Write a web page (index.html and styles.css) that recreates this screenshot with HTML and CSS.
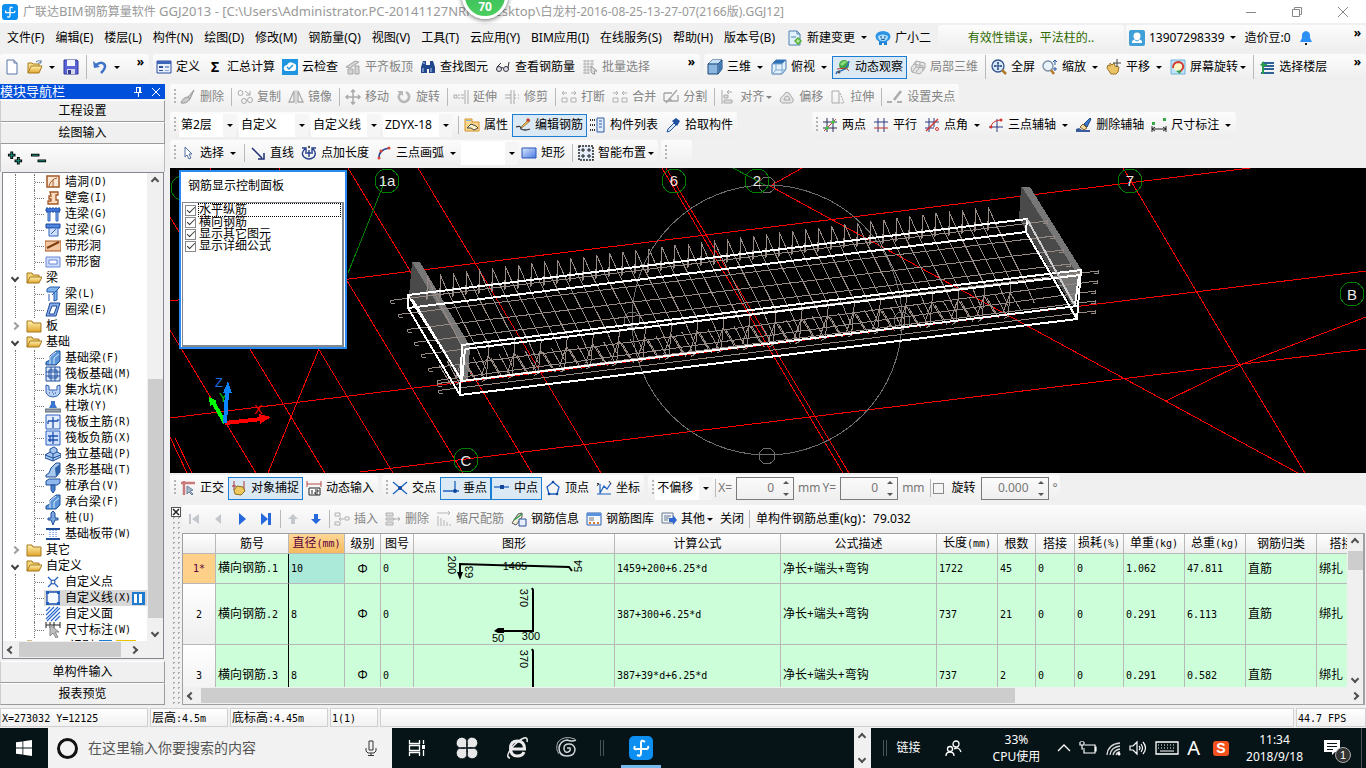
FILE: index.html
```html
<!DOCTYPE html>
<html lang="zh-CN">
<head>
    <meta charset="UTF-8">
    <meta name="viewport" content="width=device-width, initial-scale=1.0">
    <title>广联达BIM钢筋算量软件 GGJ2013</title>
    <link rel="stylesheet" href="styles.css">
</head>
<body>
    <!-- 图标库 -->
    <svg class="sprite" aria-hidden="true">
        <defs>
            <linearGradient id="gFold" x2="0" y2="1"><stop offset="0" stop-color="#fff3b0"/><stop offset="1" stop-color="#e0a32a"/></linearGradient>
            <linearGradient id="gBlue" x2="1" y2="1"><stop offset="0" stop-color="#d8e8ff"/><stop offset="1" stop-color="#4a78e0"/></linearGradient>
        </defs>
        <symbol id="i-logo" viewBox="0 0 24 24"><rect width="24" height="24" rx="5" fill="#0d8ff2"/><path d="M16 6q-4-3-4 1v10q0 4-4 2M6 10q-2 4 2 3h9q3 0 2-3" fill="none" stroke="#fff" stroke-width="2"/></symbol>
        <symbol id="i-new" viewBox="0 0 16 16"><path d="M3 1h7l3 3v11H3z" fill="#fff" stroke="#5a74a6"/><path d="M10 1v3h3" fill="#cfdcf2" stroke="#5a74a6"/></symbol>
        <symbol id="i-open" viewBox="0 0 16 16"><path d="M1 14V4h4l1 1h6v3" fill="#f9e08a" stroke="#a87b1c"/><path d="M1 14l3-7h11l-3 7z" fill="url(#gFold)" stroke="#a87b1c"/><path d="M9 3q3-3 5 0m0-2v3h-3" fill="none" stroke="#5b7fa8"/></symbol>
        <symbol id="i-save" viewBox="0 0 16 16"><path d="M1 1h13l1 1v13H1z" fill="#5a62d8" stroke="#2f3796"/><path d="M4 1h8v6H4z" fill="#f2f4ff"/><path d="M4 10h8v5H4z" fill="#d5d8e8"/><path d="M5 11h3v4H5z" fill="#333b8c"/></symbol>
        <symbol id="i-undo" viewBox="0 0 16 16"><path d="M4 6q5-4 8-1t-3 9" fill="none" stroke="#3c72c8" stroke-width="2.500"/><path d="M1 2l1 7 6-1z" fill="#3c72c8"/></symbol>
        <symbol id="i-def" viewBox="0 0 16 16"><path d="M1 2h14v12H1z" fill="#e8effb" stroke="#2d4f9e"/><path d="M1 2h14v3H1z" fill="#3d66b8"/><path d="M3 7h4v2H3zM3 11h4v1H3z" fill="#2d4f9e"/><path d="M9 7h4v2H9zM9 11h4v1H9z" fill="#8aa5d8"/></symbol>
        <symbol id="i-cloud" viewBox="0 0 16 16"><path d="M0 0h16v16H0z" fill="#1d95e0"/><path d="M4 12q-3-1-2-4 1-2 3-2 2-4 6-2 4 1 3 4 1 4-3 4z" fill="#fff"/><path d="M5 8l2 2 4-4" fill="none" stroke="#1d95e0" stroke-width="1.5"/></symbol>
        <symbol id="i-level" viewBox="0 0 16 16"><path d="M1 8l9-6 4 1-9 6zM3 10h5v5H3zM10 7h4v8h-4z" fill="#d4d4d4" stroke="#a6a6a6"/></symbol>
        <symbol id="i-binoc" viewBox="0 0 16 16"><path d="M3 2h3v4l1 1v7H1V8zM10 2h3l2 6v6H9V7l1-1zM6 6h4v4H6z" fill="#23478c"/><path d="M3 9v4M11 9v4M4 3v2" stroke="#b9d0f5"/></symbol>
        <symbol id="i-glass" viewBox="0 0 16 16"><circle cx="4" cy="10" r="2.500" fill="#dde" stroke="#333"/><circle cx="11" cy="10" r="2.500" fill="#dde" stroke="#333"/><path d="M6 9q1-1 2 0M2 8l4-4M13 9l1-6" fill="none" stroke="#333"/></symbol>
        <symbol id="i-batch" viewBox="0 0 16 16"><path d="M1 2h11M1 5h11M1 8h8M1 11h7M1 14h7M3 1v14M6 1v14M10 1v7" stroke="#b5b5b5" fill="none"/><path d="M9 7l6 5-3 0 1 3-2 0-2-2z" fill="#ddd" stroke="#999"/></symbol>
        <symbol id="i-cube" viewBox="0 0 16 16"><path d="M1 5l4-4h10v9l-4 5H1z" fill="#8ab6e0" stroke="#1c4678"/><path d="M1.500 4.500L5 1h9l-3 3.500z" fill="#c5dff5"/><path d="M12 5l3-3v8l-3 4z" fill="#3d76b0"/><path d="M1 5h10v10M11 5l4-4" fill="none" stroke="#1c4678"/></symbol>
        <symbol id="i-top" viewBox="0 0 16 16"><path d="M1 5l4-4h10v9l-4 5H1z" fill="#e3effa" stroke="#4078b0"/><path d="M1 5l4-4h10l-4 4z" fill="#2f72b5"/><path d="M11 5v10M1 5h10M5 5v6h10M1 15l4-4" fill="none" stroke="#7fa9d0"/></symbol>
        <symbol id="i-orbit" viewBox="0 0 16 16"><circle cx="9" cy="6" r="5" fill="#3fa648"/><path d="M5 5q4-5 7-2l-5 4z" fill="#8fdc7a"/><path d="M14 2q-1 9-12 11l-1 2" fill="none" stroke="#2f6fc0" stroke-width="1.500"/><path d="M2 10l9-1 3 3" fill="none" stroke="#c23c2c"/><circle cx="4" cy="13" r="1.500" fill="#555"/></symbol>
        <symbol id="i-part" viewBox="0 0 16 16"><path d="M1 9l5-7 9 2v5l-5 6-8-2zM6 2v6l9 1M6 8l-4 5M4 5l9 2v5M10 3v5l-4 5" fill="#e6e6e6" stroke="#ababab"/></symbol>
        <symbol id="i-full" viewBox="0 0 16 16"><circle cx="7" cy="7" r="6" fill="#dbe9fb" stroke="#31558c" stroke-width="1.300"/><path d="M7 3v8M3 7h8M6 4h2M6 10h2M4 6v2M10 6v2" stroke="#153a80"/><path d="M11 11l4 4" stroke="#b07a2b" stroke-width="2.500"/></symbol>
        <symbol id="i-zoom" viewBox="0 0 16 16"><circle cx="6" cy="7" r="5" fill="#eaf3fc" stroke="#7b8ba3" stroke-width="1.300"/><path d="M9 11l3 4" stroke="#b07a2b" stroke-width="2.500"/><path d="M13 1v5M11 3l2-2 2 2M13 8v4M11 10h4" stroke="#2a5aa8" fill="none"/></symbol>
        <symbol id="i-pan" viewBox="0 0 16 16"><path d="M2 6l2 1V4l2 2 2-2 1 3 4 1-1 5-2 2H5L1 9z" fill="#ecc468" stroke="#9c7425"/><path d="M11 0v8M7 4h8" stroke="#444"/></symbol>
        <symbol id="i-rot" viewBox="0 0 16 16"><path d="M1 1h14v14H1z" fill="#bfe4f7" stroke="#6cb3d9"/><circle cx="8" cy="8" r="4" fill="#fdf7c8"/><path d="M3 9q0-6 6-6 5 1 4 6l-3 4" fill="none" stroke="#d6392b" stroke-width="1.800"/><path d="M6 12l5-1-1 4z" fill="#2f9e4d"/></symbol>
        <symbol id="i-floors" viewBox="0 0 16 16"><path d="M3 3h12v2H3zM3 6h12v2H3zM3 9h12v2H3zM2 13h13v2H2z" fill="#2f6398"/><path d="M1 6l4-4v3h3v2H5v8H3V7z" fill="#2c9a4c"/></symbol>
        <symbol id="i-newchg" viewBox="0 0 16 16"><path d="M2 1h8l3 3v11H2z" fill="#e3f1fb" stroke="#4b82b4"/><path d="M10 1v3h3M4 7h5" fill="none" stroke="#4b82b4"/><path d="M11 7l4 4-4 4-4-4z" fill="#4cae2d"/><path d="M11 9v4M9 11h4" stroke="#d6f5c5"/></symbol>
        <symbol id="i-bot" viewBox="0 0 16 16"><path d="M4 9h8v6H9v-2H7v2H4z" fill="#2283d2"/><ellipse cx="8" cy="6.500" rx="7.500" ry="5.500" fill="#2d95e6"/><path d="M3 6q5-3 10 0 0 5-5 5T3 6z" fill="#aee0ff"/><path d="M5 7h2M9 7h2M6 9q2 1 4 0" stroke="#0e4b85" fill="none"/></symbol>
        <symbol id="i-user" viewBox="0 0 16 16"><rect width="16" height="16" rx="2" fill="#3f9fd6"/><circle cx="8" cy="6" r="3.500" fill="#fff"/><path d="M3 13v-2l3-2h4l3 2v2z" fill="#fff"/><path d="M6 10l2 1 2-1" stroke="#3f9fd6" fill="none"/></symbol>
        <symbol id="i-bell" viewBox="0 0 16 16"><path d="M8 1q5 1 4 7l2 4H2l2-4Q3 2 8 1z" fill="#2b8ff5"/><path d="M7 13h2v2H7z" fill="#1a1a1a"/></symbol>
        <!-- 修改工具 -->
        <symbol id="i-brush" viewBox="0 0 16 16"><path d="M14 1l-6 7 2 2zM8 8q-5 0-7 6 6 1 9-4z" fill="#c9c9c9" stroke="#999"/></symbol>
        <symbol id="i-copy" viewBox="0 0 16 16"><circle cx="3.500" cy="4" r="2.500" fill="none" stroke="#aaa"/><circle cx="7" cy="12" r="2.500" fill="none" stroke="#aaa"/><circle cx="13" cy="11" r="2.500" fill="none" stroke="#aaa"/><path d="M8 2l5 4m0-4v4H9" fill="none" stroke="#aaa"/></symbol>
        <symbol id="i-mirror" viewBox="0 0 16 16"><path d="M6 2v11H1zM10 2v11h5z" fill="none" stroke="#aaa" stroke-width="1.300"/><path d="M8 1v14" stroke="#bbb"/></symbol>
        <symbol id="i-move" viewBox="0 0 16 16"><path d="M8 1v14M1 8h14M6 3l2-2 2 2M6 13l2 2 2-2M3 6L1 8l2 2M13 6l2 2-2 2" fill="none" stroke="#aaa" stroke-width="1.500"/></symbol>
        <symbol id="i-rotate" viewBox="0 0 16 16"><path d="M5 4q-4 3-1 7 4 4 8 0 3-5-2-8" fill="none" stroke="#b8b8b8" stroke-width="2.500"/><path d="M1 2h6v5z" fill="#b8b8b8"/></symbol>
        <symbol id="i-extend" viewBox="0 0 16 16"><path d="M1 6h3v3H1zM5 6h2M5 9h2M8 6h3M8 9h3M12 1v14M15 1v14" fill="none" stroke="#aaa"/></symbol>
        <symbol id="i-trim" viewBox="0 0 16 16"><path d="M1 6h6M1 9h6M10 6h2M10 9h2M14 6h1M14 9h1M7 1v14M10 1v14" fill="none" stroke="#aaa"/></symbol>
        <symbol id="i-break" viewBox="0 0 16 16"><path d="M1 9h5v4H1zM10 9h5v4h-5zM1 4h5M3 2L1 4l2 2M10 4h5M13 2l2 2-2 2" fill="none" stroke="#b0b0b0"/></symbol>
        <symbol id="i-join" viewBox="0 0 16 16"><path d="M1 9h5v4H1zM10 9h5v4h-5zM1 4h5M4 2l2 2-2 2M10 4h5M12 2l-2 2 2 2" fill="none" stroke="#b0b0b0"/></symbol>
        <symbol id="i-split" viewBox="0 0 16 16"><path d="M1 4h8M1 12h14M1 4v8M15 6v6M3 14L14 1M6 9l3 3" fill="none" stroke="#a5a5a5" stroke-width="1.300"/></symbol>
        <symbol id="i-align" viewBox="0 0 16 16"><path d="M2 1v14M4 6h4v3H4zM4 11h8v3H4zM7 3h5M7 3l2-2M7 3l2 2" fill="#ddd" stroke="#aaa"/></symbol>
        <symbol id="i-offset" viewBox="0 0 16 16"><path d="M1 12q0-4 4-6 1-4 5-2l4 6q1 4-3 4H3zM5 11q0-3 3-4 3 1 3 4z" fill="#e5e5e5" stroke="#aaa"/></symbol>
        <symbol id="i-stretch" viewBox="0 0 16 16"><path d="M2 2h7v12H2z" fill="none" stroke="#aaa"/><path d="M10 4l4 10H9" fill="none" stroke="#aaa" stroke-dasharray="2 1"/></symbol>
        <symbol id="i-grip" viewBox="0 0 16 16"><path d="M0 13h5M10 13h5" stroke="#999" stroke-width="1.500"/><path d="M14 2l-7 9" stroke="#aaa" stroke-width="2.500"/></symbol>
        <!-- 构件工具 -->
        <symbol id="i-prop" viewBox="0 0 16 16"><path d="M1 2h7v3h7v9H1z" fill="#fbd88d" stroke="#d6922b"/><path d="M2 3h5v1H2z" fill="#7fb5e8"/><path d="M3 11l4-4 5 2 2 2-4 2-3-2z" fill="#fff4c8" stroke="#444"/></symbol>
        <symbol id="i-edit" viewBox="0 0 16 16"><path d="M1 10q5-2 5 2 4 2 9 0" fill="none" stroke="#333" stroke-width="1.300"/><path d="M14 2L7 9l-1 2 2-1 7-6z" fill="#f2c14c" stroke="#6b4d1a" stroke-width=".6"/><path d="M13 1l2 2-2 2-2-2z" fill="#c9352b"/></symbol>
        <symbol id="i-list" viewBox="0 0 16 16"><path d="M7 1h7v14H7z" fill="#e2ecfb" stroke="#2c5aa8"/><path d="M9 4h3M9 7h3M9 10h3" stroke="#2c5aa8"/><path d="M0 3h5M0 8h5M0 13h5" stroke="#333" stroke-dasharray="1 1" stroke-width="2"/></symbol>
        <symbol id="i-pick" viewBox="0 0 16 16"><path d="M9 6L3 12l-1 3 3-1 6-6z" fill="#d8e6f7" stroke="#2456a5"/><path d="M7 4l5 5 3-5-4-3z" fill="#1d4f9e"/></symbol>
        <symbol id="i-2pt" viewBox="0 0 16 16"><path d="M1 5h14M1 11h14M5 1v14M11 1v14" stroke="#2c2c5a"/><path d="M2 14L14 2" stroke="#c8452e"/><circle cx="5" cy="11" r="1.500" fill="#3c3"/><circle cx="11" cy="5" r="1.500" fill="#3c3"/></symbol>
        <symbol id="i-para" viewBox="0 0 16 16"><path d="M5 1v14M11 1v14" stroke="#2c3a80"/><path d="M1 5h14" stroke="#2c3a80"/><path d="M1 11h14" stroke="#c8352e"/></symbol>
        <symbol id="i-angle" viewBox="0 0 16 16"><path d="M1 5h14M1 11h9M5 1v14M10 1v9" stroke="#2c3a80"/><path d="M2 14L14 2" fill="none" stroke="#d1352e" stroke-width="1.500"/><circle cx="13" cy="12" r="1.500" fill="none" stroke="#d1352e"/></symbol>
        <symbol id="i-3ax" viewBox="0 0 16 16"><path d="M1 10h14M9 2v13" stroke="#2c3a80"/><path d="M3 11q0-7 9-8" fill="none" stroke="#d1352e"/><circle cx="3" cy="10" r="1.500" fill="#d1352e"/><circle cx="13" cy="3" r="1.500" fill="#d1352e"/></symbol>
        <symbol id="i-delax" viewBox="0 0 16 16"><path d="M14 1L8 7l3 3 4-8z" fill="#3b78c9" stroke="#234a80"/><path d="M7 7l4 4-3 2-4-3z" fill="#f2dc9a" stroke="#7d6024"/><path d="M0 12l3-1 3 2h8v2H0z" fill="#3a5a9c"/></symbol>
        <symbol id="i-dim" viewBox="0 0 16 16"><path d="M1 9v6M15 9v6M1 12h14M4 10l-3 2 3 2M12 10l3 2-3 2" fill="none" stroke="#222"/><path d="M1 5h3v3H1zM12 1h3v3h-3z" fill="#37a84a"/></symbol>
        <!-- 绘图 -->
        <symbol id="i-arrow" viewBox="0 0 16 16"><path d="M5 2v10l2-2 2 4 2-1-2-4h3z" fill="#fff" stroke="#51719e"/></symbol>
        <symbol id="i-line" viewBox="0 0 16 16"><path d="M2 3l10 10M14 8v6H8" fill="none" stroke="#1c2f78" stroke-width="1.500"/></symbol>
        <symbol id="i-ptlen" viewBox="0 0 16 16"><path d="M8 5v7M4 8h8M5 3q-6 5-2 9 5 4 10 0 3-4-1-8M1 3h4v4M11 7V3h4" fill="none" stroke="#24408a" stroke-width="1.400"/><circle cx="8" cy="2" r="1.200" fill="#555"/></symbol>
        <symbol id="i-arc" viewBox="0 0 16 16"><path d="M3 14q-1-9 10-11" fill="none" stroke="#27418f" stroke-width="1.500"/><circle cx="3" cy="13" r="1.500" fill="#d43"/><circle cx="5" cy="6" r="1.500" fill="#d43"/><circle cx="13" cy="3" r="1.500" fill="#d43"/></symbol>
        <symbol id="i-rect" viewBox="0 0 16 16"><path d="M1 3h14v10H1z" fill="url(#gBlue)" stroke="#2a55b5"/></symbol>
        <symbol id="i-smart" viewBox="0 0 16 16"><path d="M1 1h14v14H1z" fill="#e4eefb" stroke="#222" stroke-dasharray="2 1" stroke-width="1.500"/><path d="M5 3v4M3 5h4M11 3v4M9 5h4M5 9v4M3 11h4M11 9v4M9 11h4" stroke="#1a1a1a"/></symbol>
        <!-- 捕捉 -->
        <symbol id="i-ortho" viewBox="0 0 16 16"><path d="M1 3h14M4 1v14" stroke="#c97b7b" stroke-width="2.500"/><path d="M7 6v8l2-2 3 3 1-1-3-3 3-1z" fill="#a9bccf" stroke="#6c8199"/></symbol>
        <symbol id="i-snap" viewBox="0 0 16 16"><path d="M1 6h4M3 1v9M13 1v9" stroke="#a33"/><path d="M3 10l3-4 6 1 2 4-4 4-6-1z" fill="#edc95e" stroke="#8f6b1e"/></symbol>
        <symbol id="i-dyn" viewBox="0 0 16 16"><path d="M1 4h14M1 1v6M15 1v6" stroke="#b34a4a"/><path d="M3 8h11v7H3z" fill="#fff" stroke="#222"/><path d="M6 10v4M9 10h3v2H9v2h3" fill="none" stroke="#222"/></symbol>
        <symbol id="i-x" viewBox="0 0 16 16"><path d="M1 2l14 12M15 2L1 14" stroke="#1f62c2" stroke-width="1.300"/><circle cx="8" cy="8" r="2" fill="#12459c"/></symbol>
        <symbol id="i-perp" viewBox="0 0 16 16"><path d="M0 11h16M12 1v10" stroke="#1f62c2" stroke-width="1.300"/><circle cx="12" cy="11" r="2" fill="#12459c"/></symbol>
        <symbol id="i-mid" viewBox="0 0 16 16"><path d="M0 7h15" stroke="#1f62c2" stroke-width="1.300"/><path d="M6 5h4v4H6z" fill="#12459c"/></symbol>
        <symbol id="i-vert" viewBox="0 0 16 16"><path d="M8 2l6 5-2 7H4L2 7z" fill="none" stroke="#1f62c2" stroke-width="1.300"/><circle cx="8" cy="2" r="1.300" fill="#12459c"/><circle cx="4" cy="14" r="1.300" fill="#12459c"/><circle cx="12" cy="14" r="1.300" fill="#12459c"/></symbol>
        <symbol id="i-coord" viewBox="0 0 16 16"><path d="M4 4v10h11M1 14h3M4 13l4-7 3 3 4-6" fill="none" stroke="#1f62c2" stroke-width="1.200"/><path d="M1 3l2 2M3 3L1 6M13 1l2 3" stroke="#333"/></symbol>
        <!-- 钢筋编辑 -->
        <symbol id="i-first" viewBox="0 0 16 16"><path d="M3 3h2v10H3zM13 3v10L6 8z" fill="#c4c8cc"/></symbol>
        <symbol id="i-prev" viewBox="0 0 16 16"><path d="M11 3v10L5 8z" fill="#c4c8cc"/></symbol>
        <symbol id="i-next" viewBox="0 0 16 16"><path d="M5 2v12l7-6z" fill="#2468dc"/></symbol>
        <symbol id="i-last" viewBox="0 0 16 16"><path d="M3 2v12l7-6zM10 2h3v12h-3z" fill="#2468dc"/></symbol>
        <symbol id="i-up" viewBox="0 0 16 16"><path d="M8 3l5 5h-3v5H6V8H3z" fill="#c4c8cc"/></symbol>
        <symbol id="i-down" viewBox="0 0 16 16"><path d="M8 13L3 8h3V3h4v5h3z" fill="#2468dc"/></symbol>
        <symbol id="i-ins" viewBox="0 0 16 16"><path d="M1 2h5v3H1zM1 11h5v3H1zM11 6h4v3h-4zM10 8H5M7 6L5 8l2 2" fill="none" stroke="#b0b0b0"/></symbol>
        <symbol id="i-del" viewBox="0 0 16 16"><path d="M1 2h7v3H1zM1 11h7v3H1zM1 7h8v2H1zM9 8h6M13 6l2 2-2 2" fill="#ddd" stroke="#b0b0b0"/></symbol>
        <symbol id="i-scale" viewBox="0 0 16 16"><path d="M1 2h13M12 0l2 2-2 2M2 5v10M5 7v8M8 9v6M11 11v4M14 13v2" fill="none" stroke="#b5b5b5"/></symbol>
        <symbol id="i-info" viewBox="0 0 16 16"><path d="M1 12l6-9 4-1v4L5 14z" fill="#f4f0d8" stroke="#555"/><path d="M8 8h7v7H8z" fill="#e8eefa" stroke="#2d4f9e"/><path d="M3 9l8-6" stroke="#2c9a4c" stroke-width="1.500"/></symbol>
        <symbol id="i-lib" viewBox="0 0 16 16"><path d="M1 2h14v12H1z" fill="#f3f8ff" stroke="#2d5fae"/><path d="M1 2h14v3H1z" fill="#5b92de"/><path d="M3 7h5M3 9h5" stroke="#777"/><path d="M3 12h2M7 12h2M11 12h2" stroke="#e07b2c" stroke-width="2"/></symbol>
        <symbol id="i-other" viewBox="0 0 16 16"><path d="M1 2h11v10H1z" fill="#f2f4f8" stroke="#68788f"/><path d="M3 5h7M3 7h5M3 9h4" stroke="#68788f"/><path d="M8 7h4V4l4 5-4 5v-3H8z" fill="#2f66d0"/></symbol>
        <!-- 构件树 -->
        <symbol id="t-open" viewBox="0 0 16 16"><path d="M1 13V3h5l1 2h6v2" fill="#f6d77a" stroke="#a5781c"/><path d="M1 13l3-6h12l-3 6z" fill="url(#gFold)" stroke="#a5781c"/></symbol>
        <symbol id="t-shut" viewBox="0 0 16 16"><path d="M1 14V3h5l1 2h8v9z" fill="url(#gFold)" stroke="#a5781c"/></symbol>
        <symbol id="t-hole" viewBox="0 0 16 16"><path d="M2 2h12v11H2z" fill="#fbe9d8" stroke="#a45722" stroke-width="1.500"/><path d="M4 12q2-7 8-8M8 6v7" stroke="#a45722" fill="none"/></symbol>
        <symbol id="t-niche" viewBox="0 0 16 16"><path d="M5 2h8v3h-2v5h2v4H3v-3h3V9H4V6h2z" fill="#fbdcc0" stroke="#a45722" stroke-width="1.300"/></symbol>
        <symbol id="t-lbeam" viewBox="0 0 16 16"><path d="M1 2h14v4H1z" fill="#3c73d4" stroke="#1d469c" stroke-dasharray="2 1"/><path d="M3 6h2v9H3zM11 6h2v9h-2z" fill="#8eb4f0" stroke="#2f62bd"/></symbol>
        <symbol id="t-lintel" viewBox="0 0 16 16"><path d="M1 2h14v4H1z" fill="#4f85dc" stroke="#1d469c"/><path d="M4 6h9v8H4zM6 12l5-5" fill="#cfe0fa" stroke="#2f62bd"/></symbol>
        <symbol id="t-strip" viewBox="0 0 16 16"><path d="M0 3h16v10H0z" fill="#f3c6a0" stroke="#a45722"/><path d="M2 10l12-6" stroke="#7d3c10" stroke-width="2"/></symbol>
        <symbol id="t-win" viewBox="0 0 16 16"><path d="M1 3h14v10H1z" fill="#cddcfb" stroke="#6a87d8"/><path d="M4 6h8v4H4z" fill="#fff" stroke="#6a87d8"/></symbol>
        <symbol id="t-beam" viewBox="0 0 16 16"><path d="M2 3l3-2h10l-3 3v10l-3 1V6H2z" fill="#7fb4ec" stroke="#265cae"/><path d="M4 8v7M12 4L7 9" stroke="#265cae"/></symbol>
        <symbol id="t-ring" viewBox="0 0 16 16"><path d="M5 1h10l-4 13H1zM7 4l-3 8h5l3-8z" fill="#88b0e8" fill-rule="evenodd" stroke="#1c469a"/></symbol>
        <symbol id="t-found" viewBox="0 0 16 16"><path d="M1 15v-3l4-2V6l6-5h4v10l-4 4z" fill="#5a95d8" stroke="#1c4f94"/><path d="M5 14V7l6-5M9 14V8l5-4" fill="none" stroke="#dcebfa"/></symbol>
        <symbol id="t-raft" viewBox="0 0 16 16"><path d="M1 1h14v14H1zM4 4h8v8H4zM1 6h14M1 10h14M6 1v14M10 1v14" fill="#dbe8fa" stroke="#1e4f9e"/></symbol>
        <symbol id="t-pit" viewBox="0 0 16 16"><path d="M1 3l3 1v4h8V4l3-1v8q-2 4-7 4T1 11z" fill="#bcd4f4" stroke="#2c5fb0"/><path d="M4 11h1M7 10h1M10 11h1M8 12h1" stroke="#1c3f80"/></symbol>
        <symbol id="t-pier" viewBox="0 0 16 16"><path d="M0 11h16v3H0z" fill="#9aa3ad" stroke="#5e6a78"/><path d="M4 10l2-4h4l2 4zM6 3h4v3H6z" fill="#3c77cf"/></symbol>
        <symbol id="t-rebar" viewBox="0 0 16 16"><path d="M1 1h14v14H1z" fill="#e3edfc" stroke="#2a5fc0"/><path d="M8 3v11M3 7h10M3 7v3M13 7V5" fill="none" stroke="#1c4fb0" stroke-width="1.300"/></symbol>
        <symbol id="t-rebar2" viewBox="0 0 16 16"><path d="M1 1h14v14H1z" fill="#cfe0fb" stroke="#2a5fc0"/><path d="M8 2v12M3 6h10M3 10h10M5 6v6" fill="none" stroke="#1c4fb0" stroke-width="1.300"/></symbol>
        <symbol id="t-iso" viewBox="0 0 16 16"><path d="M0 9l5-3V3l4-2 3 2v3l4 2v3l-8 4-8-3z" fill="#a5c6f0" stroke="#1f4f98"/><path d="M5 6l3 2 4-2M8 8v7M0 9l8 3 8-3" fill="none" stroke="#1f4f98"/></symbol>
        <symbol id="t-strf" viewBox="0 0 16 16"><path d="M1 15v-2l3-2 2-5 5-5h4v9l-4 5z" fill="#a9c8ee" stroke="#1c4f94"/><path d="M10 6l5-4v8l-4 5z" fill="#2f62a8"/></symbol>
        <symbol id="t-cap" viewBox="0 0 16 16"><path d="M1 3l3-2h11v4l-3 2H1z" fill="#8fb8ee" stroke="#1f4f98"/><path d="M6 7h4v5l-2 3-2-3z" fill="#4a82d0" stroke="#1f4f98"/></symbol>
        <symbol id="t-pile" viewBox="0 0 16 16"><path d="M6 3l2-2 2 2v5h3v2h-3l-2 5-2-5H3V8h3z" fill="#7aa6e2" stroke="#1f4f98"/></symbol>
        <symbol id="t-band" viewBox="0 0 16 16"><path d="M1 3h14M1 13h14" stroke="#1f4f98" stroke-width="2"/><path d="M5 4v8M8 4v8M11 4v8" stroke="#3c77cf" stroke-dasharray="1 1"/></symbol>
        <symbol id="t-pt" viewBox="0 0 16 16"><path d="M3 3l10 10M13 3L3 13" stroke="#1f5fc0" stroke-width="1.300"/><circle cx="8" cy="8" r="2" fill="#fff" stroke="#12459c"/></symbol>
        <symbol id="t-ln" viewBox="0 0 16 16"><path d="M2 2h12v12H2z" fill="#f4f8ff" stroke="#1f4fb0" stroke-width="1.300"/><path d="M1 1h3v3H1zM12 1h3v3h-3zM1 12h3v3H1zM12 12h3v3h-3z" fill="#1f5fc0"/></symbol>
        <symbol id="t-face" viewBox="0 0 16 16"><path d="M1 5l4-4M1 9l8-8M1 13L13 1M2 15L15 2M6 15l9-9M10 15l5-5" stroke="#2a6ad0" stroke-width="1.200"/></symbol>
        <symbol id="t-dim" viewBox="0 0 16 16"><path d="M1 0v6M15 0v6M1 3h14M5 0v6M9 0v6" stroke="#222"/><path d="M5 3v11l3-3 3 5 2-1-3-5h4z" fill="#c0c0c0" stroke="#888"/></symbol>
        <!-- 任务栏 -->
        <symbol id="w-start" viewBox="0 0 16 16"><path d="M0 2.300L6.500 1.400v6.200H0zM7.300 1.300L16 0v7.600H7.300zM0 8.400h6.500v6.200L0 13.700zM7.300 8.400H16V16l-8.700-1.300z" fill="#fff"/></symbol>
        <symbol id="w-mic" viewBox="0 0 16 16"><path d="M6 1h4v9H6zM3 8v3l2 2h6l2-2V8M8 13v2M5 15.500h6" fill="none" stroke="#333"/></symbol>
        <symbol id="w-task" viewBox="0 0 18 18"><path d="M1.500 1v3.500h10V1M1.500 17v-3.500h10V17M1.500 6.500h10v5h-10zM15.500 1v4M15.500 11v6" fill="none" stroke="#fff" stroke-width="1.300"/><path d="M14 6h3v4h-3z" fill="#fff"/></symbol>
        <symbol id="w-fan" viewBox="0 0 24 24"><path d="M12 12Q3 14 1 8 1 2 7 1q7 1 5 11z M12 12Q10 3 16 1q6 0 7 6-1 7-11 5z M12 12q9-2 11 4 0 6-6 7-7-1-5-11z M12 12q2 9-4 11-6 0-7-6 1-7 11-5z" fill="#e8e8e8" stroke="#061317"/></symbol>
        <symbol id="w-ie" viewBox="0 0 24 24"><path d="M6 13h15M19.500 13q0-8-7-8t-7 7.500 7 7.500q5 0 6.500-4" fill="none" stroke="#ececec" stroke-width="3"/><path d="M5 22q-5-1 1-9 7-9 13-11 4-1 3 4" fill="none" stroke="#ececec" stroke-width="1.500"/></symbol>
        <symbol id="w-g" viewBox="0 0 24 24"><path d="M21 4q-4 2-9 0-7 1-8 8 0 8 8 8 8 0 8-7-1-5-6-5-5 0-5 4 0 5 4 4 3-1 2-4h-3" fill="none" stroke="#d0d6d8" stroke-width="1.500"/><path d="M20 3Q9-1 3 6q-3 7 1 12" fill="none" stroke="#aab2b5"/></symbol>
        <symbol id="w-people" viewBox="0 0 18 18"><circle cx="12" cy="5" r="3" fill="none" stroke="#fff" stroke-width="1.300"/><circle cx="6" cy="10" r="2.500" fill="none" stroke="#fff" stroke-width="1.300"/><path d="M2 17q0-4 4-4t4 4M10 10q5-3 7 3" fill="none" stroke="#fff" stroke-width="1.300"/></symbol>
        <symbol id="w-up" viewBox="0 0 14 14"><path d="M1 10l6-6 6 6" fill="none" stroke="#fff" stroke-width="1.300"/></symbol>
        <symbol id="w-bat" viewBox="0 0 18 14"><path d="M6 4h10v8H5V9M16 6h1v4h-1M1 1v3h4V1M3 4v4h3M2 0v1M4 0v1" fill="none" stroke="#fff" stroke-width="1.200"/></symbol>
        <symbol id="w-wifi" viewBox="0 0 16 16"><path d="M2 15Q3 4 15 3M5 15q1-8 10-9M8 15q1-5 7-6M11 15q1-3 4-3" fill="none" stroke="#d8d8d8" stroke-width="1.300"/><circle cx="14" cy="14" r="1.500" fill="#fff"/></symbol>
        <symbol id="w-vol" viewBox="0 0 18 16"><path d="M1 6h3l4-4v12l-4-4H1zM10 6q2 2 0 4M12 4q3 4 0 8M14 2q5 6 0 12" fill="none" stroke="#fff" stroke-width="1.200"/></symbol>
        <symbol id="w-kbd" viewBox="0 0 24 16"><path d="M1 2h22v12H1z" fill="none" stroke="#fff" stroke-width="1.300"/><path d="M3 5h18M3 8h18" stroke="#fff" stroke-dasharray="1 2"/><path d="M5 11h14" stroke="#fff"/></symbol>
        <symbol id="w-note" viewBox="0 0 18 18"><path d="M1 1h16v12h-5l-3 3v-3H1z" fill="#fff"/><path d="M4 4.500h10M4 7.500h10M4 10.500h6" stroke="#061317"/></symbol>
    </svg>

    <!-- 标题栏 -->
    <header class="titlebar">
        <svg class="ic"><use href="#i-logo"/></svg>
        <h1>广联达<span>BIM</span>钢筋算量软件<span> GGJ2013 - [C:\Users\Administrator.PC-20141127NRHI\Desktop\</span>白龙村-2016-08-25-13-27-07(2166版).GGJ12]</h1>
        <div class="win-btns">
            <button aria-label="最小化"><svg viewBox="0 0 10 10"><path d="M0 5.500h10"/></svg></button>
            <button aria-label="还原"><svg viewBox="0 0 10 10"><path d="M.5 2.500h7v7h-7zM2.500 2.500v-2h7v7h-2"/></svg></button>
            <button aria-label="关闭"><svg viewBox="0 0 10 10"><path d="M0 0l10 10M10 0L0 10"/></svg></button>
        </div>
        <div class="ball">70</div>
    </header>

    <!-- 菜单 -->
    <nav class="menubar">
        <div class="menus">
            <button>文件(F)</button><button>编辑(E)</button><button>楼层(L)</button><button>构件(N)</button><button>绘图(D)</button><button>修改(M)</button><button>钢筋量(Q)</button><button>视图(V)</button><button>工具(T)</button><button>云应用(Y)</button><button>BIM应用(I)</button><button>在线服务(S)</button><button>帮助(H)</button><button>版本号(B)</button>
        </div>
        <button class="tb"><svg class="ic"><use href="#i-newchg"/></svg>新建变更<i class="caret"></i></button>
        <button class="tb"><svg class="ic"><use href="#i-bot"/></svg>广小二</button>
        <div class="strip notice">有效性错误，平法柱的..</div>
        <div class="strip account">
            <button class="tb"><svg class="ic"><use href="#i-user"/></svg>13907298339<i class="caret"></i></button>
            <button class="tb">造价豆:0</button>
            <button class="tb" aria-label="通知"><svg class="ic"><use href="#i-bell"/></svg></button>
            <span class="more">»</span>
        </div>
    </nav>

    <div class="toolbar-top">
        <div class="strip files">
            <button class="tb" aria-label="新建"><svg class="ic"><use href="#i-new"/></svg></button>
            <button class="tb" aria-label="打开"><svg class="ic"><use href="#i-open"/></svg><i class="caret"></i></button>
            <button class="tb" aria-label="保存"><svg class="ic"><use href="#i-save"/></svg></button>
            <i class="sep"></i>
            <button class="tb" aria-label="撤销"><svg class="ic"><use href="#i-undo"/></svg><i class="caret"></i></button>
            <span class="more">»</span>
        </div>
        <div class="strip calc">
            <button class="tb"><svg class="ic"><use href="#i-def"/></svg>定义</button>
            <button class="tb"><b class="sigma">Σ</b>汇总计算</button>
            <button class="tb"><svg class="ic"><use href="#i-cloud"/></svg>云检查</button>
            <button class="tb off"><svg class="ic"><use href="#i-level"/></svg>平齐板顶</button>
            <button class="tb"><svg class="ic"><use href="#i-binoc"/></svg>查找图元</button>
            <button class="tb"><svg class="ic"><use href="#i-glass"/></svg>查看钢筋量</button>
            <button class="tb off"><svg class="ic"><use href="#i-batch"/></svg>批量选择</button>
            <span class="more">»</span>
        </div>
        <div class="strip view">
            <button class="tb"><svg class="ic"><use href="#i-cube"/></svg>三维<i class="caret"></i></button>
            <button class="tb"><svg class="ic"><use href="#i-top"/></svg>俯视<i class="caret"></i></button>
            <button class="tb on"><svg class="ic"><use href="#i-orbit"/></svg>动态观察</button>
            <button class="tb off"><svg class="ic"><use href="#i-part"/></svg>局部三维</button>
            <i class="sep"></i>
            <button class="tb"><svg class="ic"><use href="#i-full"/></svg>全屏</button>
            <button class="tb"><svg class="ic"><use href="#i-zoom"/></svg>缩放<i class="caret"></i></button>
            <button class="tb"><svg class="ic"><use href="#i-pan"/></svg>平移<i class="caret"></i></button>
            <button class="tb"><svg class="ic"><use href="#i-rot"/></svg>屏幕旋转<i class="caret tight"></i></button>
            <i class="sep"></i>
            <button class="tb"><svg class="ic"><use href="#i-floors"/></svg>选择楼层</button>
            <span class="more">»</span>
        </div>
    </div>

    <main>
        <!-- 模块导航栏 -->
        <aside class="sidebar">
            <div class="side-head"><h2>模块导航栏</h2>
                <button aria-label="固定"><svg viewBox="0 0 10 10"><path d="M3 0h5v5h1v1H6v4H5V6H1V5h2z"/><path d="M4 1h2v4H4z" fill="#0050dc"/></svg></button>
                <button aria-label="关闭"><svg viewBox="0 0 10 10"><path d="M1 1l8 8M9 1L1 9" stroke="#fff"/></svg></button>
            </div>
            <button class="side-btn">工程设置</button>
            <button class="side-btn">绘图输入</button>
            <div class="tree-tools">
                <button aria-label="全部展开"><svg viewBox="0 0 18 16"><path d="M5 1v8M1 5h8M12 7v8M8 11h8" stroke="#000" stroke-width="3"/><path d="M5 2v6M2 5h6M12 8v6M9 11h6" stroke="#1aa08c"/></svg></button>
                <button aria-label="全部折叠"><svg viewBox="0 0 18 16"><path d="M1 5h9M8 11h9" stroke="#000" stroke-width="3"/><path d="M2 5h7M9 11h7" stroke="#1aa08c"/></svg></button>
            </div>
            <div class="tree-box">
                <div class="tree-view">
                    <div class="tree">
                        <ul>
                            <li><svg class="ic"><use href="#t-hole"/></svg>墙洞<i>(D)</i></li>
                            <li><svg class="ic"><use href="#t-niche"/></svg>壁龛<i>(I)</i></li>
                            <li><svg class="ic"><use href="#t-lbeam"/></svg>连梁<i>(G)</i></li>
                            <li><svg class="ic"><use href="#t-lintel"/></svg>过梁<i>(G)</i></li>
                            <li><svg class="ic"><use href="#t-strip"/></svg>带形洞</li>
                            <li><svg class="ic"><use href="#t-win"/></svg>带形窗</li>
                        </ul>
                        <div class="branch open"><svg class="ic"><use href="#t-open"/></svg>梁</div>
                        <ul>
                            <li><svg class="ic"><use href="#t-beam"/></svg>梁<i>(L)</i></li>
                            <li><svg class="ic"><use href="#t-ring"/></svg>圈梁<i>(E)</i></li>
                        </ul>
                        <div class="branch"><svg class="ic"><use href="#t-shut"/></svg>板</div>
                        <div class="branch open"><svg class="ic"><use href="#t-open"/></svg>基础</div>
                        <ul>
                            <li><svg class="ic"><use href="#t-found"/></svg>基础梁<i>(F)</i></li>
                            <li><svg class="ic"><use href="#t-raft"/></svg>筏板基础<i>(M)</i></li>
                            <li><svg class="ic"><use href="#t-pit"/></svg>集水坑<i>(K)</i></li>
                            <li><svg class="ic"><use href="#t-pier"/></svg>柱墩<i>(Y)</i></li>
                            <li><svg class="ic"><use href="#t-rebar"/></svg>筏板主筋<i>(R)</i></li>
                            <li><svg class="ic"><use href="#t-rebar2"/></svg>筏板负筋<i>(X)</i></li>
                            <li><svg class="ic"><use href="#t-iso"/></svg>独立基础<i>(P)</i></li>
                            <li><svg class="ic"><use href="#t-strf"/></svg>条形基础<i>(T)</i></li>
                            <li><svg class="ic"><use href="#t-cap"/></svg>桩承台<i>(V)</i></li>
                            <li><svg class="ic"><use href="#t-found"/></svg>承台梁<i>(F)</i></li>
                            <li><svg class="ic"><use href="#t-pile"/></svg>桩<i>(U)</i></li>
                            <li><svg class="ic"><use href="#t-band"/></svg>基础板带<i>(W)</i></li>
                        </ul>
                        <div class="branch"><svg class="ic"><use href="#t-shut"/></svg>其它</div>
                        <div class="branch open"><svg class="ic"><use href="#t-open"/></svg>自定义</div>
                        <ul>
                            <li><svg class="ic"><use href="#t-pt"/></svg>自定义点</li>
                            <li class="sel"><svg class="ic"><use href="#t-ln"/></svg>自定义线<i>(X)</i><b class="grid-mark"></b></li>
                            <li><svg class="ic"><use href="#t-face"/></svg>自定义面</li>
                            <li><svg class="ic"><use href="#t-dim"/></svg>尺寸标注<i>(W)</i></li>
                        </ul>
                        <div class="branch"><svg class="ic"><use href="#t-shut"/></svg>CAD识别<b class="grid-mark"></b><b class="new-mark"></b></div>
                    </div>
                    <div class="vscroll"><b class="arr up"></b><span class="thumb"></span><b class="arr down"></b></div>
                </div>
                <div class="hscroll"><b class="arr left"></b><span class="thumb"></span><b class="arr right"></b></div>
            </div>
            <button class="side-btn">单构件输入</button>
            <button class="side-btn">报表预览</button>
        </aside>

        <section class="work">
            <div class="tool-rows">
                <div class="row">
                    <div class="strip grip edits">
                        <button class="tb off"><svg class="ic"><use href="#i-brush"/></svg>删除</button>
                        <i class="sep"></i>
                        <button class="tb off"><svg class="ic"><use href="#i-copy"/></svg>复制</button>
                        <button class="tb off"><svg class="ic"><use href="#i-mirror"/></svg>镜像</button>
                        <i class="sep"></i>
                        <button class="tb off"><svg class="ic"><use href="#i-move"/></svg>移动</button>
                        <button class="tb off"><svg class="ic"><use href="#i-rotate"/></svg>旋转</button>
                        <i class="sep"></i>
                        <button class="tb off"><svg class="ic"><use href="#i-extend"/></svg>延伸</button>
                        <button class="tb off"><svg class="ic"><use href="#i-trim"/></svg>修剪</button>
                        <i class="sep"></i>
                        <button class="tb off"><svg class="ic"><use href="#i-break"/></svg>打断</button>
                        <button class="tb off"><svg class="ic"><use href="#i-join"/></svg>合并</button>
                        <button class="tb off"><svg class="ic"><use href="#i-split"/></svg>分割</button>
                        <i class="sep"></i>
                        <button class="tb off"><svg class="ic"><use href="#i-align"/></svg>对齐<i class="caret tight"></i></button>
                        <button class="tb off"><svg class="ic"><use href="#i-offset"/></svg>偏移</button>
                        <button class="tb off"><svg class="ic"><use href="#i-stretch"/></svg>拉伸</button>
                        <i class="sep"></i>
                        <button class="tb off"><svg class="ic"><use href="#i-grip"/></svg>设置夹点</button>
                    </div>
                </div>
                <div class="row">
                    <div class="strip grip comps">
                        <label class="combo w57"><select aria-label="楼层"><option>第2层</option></select></label>
                        <label class="combo w69"><select aria-label="构件类别"><option>自定义</option></select></label>
                        <label class="combo w69"><select aria-label="构件类型"><option>自定义线</option></select></label>
                        <label class="combo w69"><select aria-label="构件"><option>ZDYX-18</option></select></label>
                        <i class="sep"></i>
                        <button class="tb"><svg class="ic"><use href="#i-prop"/></svg>属性</button>
                        <button class="tb on"><svg class="ic"><use href="#i-edit"/></svg>编辑钢筋</button>
                        <button class="tb"><svg class="ic"><use href="#i-list"/></svg>构件列表</button>
                        <button class="tb"><svg class="ic"><use href="#i-pick"/></svg>拾取构件</button>
                    </div>
                    <div class="strip grip axes">
                        <button class="tb"><svg class="ic"><use href="#i-2pt"/></svg>两点</button>
                        <button class="tb"><svg class="ic"><use href="#i-para"/></svg>平行</button>
                        <button class="tb"><svg class="ic"><use href="#i-angle"/></svg>点角<i class="caret"></i></button>
                        <button class="tb"><svg class="ic"><use href="#i-3ax"/></svg>三点辅轴<i class="caret"></i></button>
                        <button class="tb"><svg class="ic"><use href="#i-delax"/></svg>删除辅轴</button>
                        <button class="tb"><svg class="ic"><use href="#i-dim"/></svg>尺寸标注<i class="caret"></i></button>
                    </div>
                </div>
                <div class="row">
                    <div class="strip grip draws">
                        <button class="tb"><svg class="ic"><use href="#i-arrow"/></svg>选择<i class="caret"></i></button>
                        <i class="sep"></i>
                        <button class="tb"><svg class="ic"><use href="#i-line"/></svg>直线</button>
                        <button class="tb"><svg class="ic"><use href="#i-ptlen"/></svg>点加长度</button>
                        <button class="tb"><svg class="ic"><use href="#i-arc"/></svg>三点画弧<i class="caret"></i></button>
                        <label class="combo w57"><select aria-label="半径"><option></option></select></label>
                        <button class="tb"><svg class="ic"><use href="#i-rect"/></svg>矩形</button>
                        <i class="sep"></i>
                        <button class="tb"><svg class="ic"><use href="#i-smart"/></svg>智能布置<i class="caret tight"></i></button>
                    </div>
                    <div class="strip grip empty"></div>
                </div>
            </div>

            <!-- 三维视图 -->
            <div class="viewport">
                <svg class="scene" viewBox="170 168 1196 305" preserveAspectRatio="xMinYMin slice">
                    <g class="axis-lines">
                        <path d="M170 301L1250 168M170 418L1366 271M360 472L1366 349"/>
                        <path d="M170 217L325 473M170 330L256 473M170 437L187 473M175 438L192 473M319 349L268 473M210 168L393 473M279 168L463 473M348 168L532 473M418 168L601 473M662 168L843 473M666 168L849 473"/>
                        <path d="M770 186L802 168M770 186L1298 473M1166 401L1240 365L1366 317M1123 168L1131 181L1240 365L1305 473"/>
                    </g>
                    <g class="orbit"><circle cx="767" cy="320" r="135"/><circle cx="767" cy="185" r="8"/><circle cx="767" cy="456" r="8"/><circle cx="632" cy="320" r="8"/><circle cx="902" cy="320" r="8"/></g>
                    <g class="bubbles">
                        <path d="M385 181L348 273M733 168L765 185"/>
                        <circle cx="183" cy="188" r="12"/><circle cx="387" cy="181" r="12"/><circle cx="674" cy="181" r="12"/><circle cx="757" cy="181" r="12"/><circle cx="1130" cy="181" r="12"/><circle cx="1352" cy="294" r="12"/><circle cx="466" cy="460" r="12"/>
                        <text x="387" y="186">1a</text><text x="674" y="186">6</text><text x="757" y="186">2</text><text x="1130" y="186">7</text><text x="1352" y="300">B</text><text x="466" y="466">C</text>
                    </g>
                    <g class="box">
                        <path d="M408 295L462 381M1027 219L1074 304"/>
                    </g>
                    <path d="M412 263L420 263L468 345L463 347L460 381L409 295z" fill="#4a4a4a"/>
                    <path d="M412 262L420 262L470 346L468 381L460 381L462 345z" fill="#777"/>
                    <path d="M1021 187L1030 187L1081 269L1076 306L1071 304L1019 219z" fill="#4a4a4a"/>
                    <path d="M1022 187L1030 187L1081 269L1077 274z" fill="#777"/>
                    <path d="M1057 273L1080 271L1077 300L1070 300z" fill="#777"/>
                    <g class="rebar" id="rebar"></g>
                    <g class="box">
                        <path d="M408 295L1027 219L1026 232L408 308zM462 345L1081 270L1077 319L460 395zM465 349L1080 275M462 381L1077 306"/>
                        <path d="M412 299L462 381M408 308L460 395M465 349L462 381M1026 232L1077 319M1079 275L1075 305"/>
                        <path d="M1027 219L1074 304" stroke="#ccc"/>
                    </g>
                    <g class="tripod">
                        <path d="M225 423L262 419" stroke="#f00"/><path d="M259 414L271 417L260 424z" fill="#f00"/><text x="254" y="414" fill="#f00">X</text>
                        <path d="M225 423L213 402" stroke="#0f0"/><path d="M209 397L217 401L210 406z" fill="#0f0"/><text x="219" y="402" fill="#0c0">Y</text>
                        <path d="M225 423L227 392" stroke="#0a84ff"/><path d="M228 381L232 393L223 393z" fill="#0a84ff"/><text x="215" y="387" fill="#1d6fe0">Z</text>
                    </g>
                </svg>
                <div class="float-panel">
                    <h3>钢筋显示控制面板</h3>
                    <div class="checks">
                        <label class="focus"><input type="checkbox" checked><span>水平纵筋</span></label>
                        <label><input type="checkbox" checked><span>横向钢筋</span></label>
                        <label><input type="checkbox" checked><span>显示其它图元</span></label>
                        <label><input type="checkbox" checked><span>显示详细公式</span></label>
                    </div>
                </div>
            </div>

            <!-- 捕捉工具 -->
            <div class="snapbar">
                <div class="strip grip">
                    <button class="tb"><svg class="ic"><use href="#i-ortho"/></svg>正交</button>
                    <button class="tb on"><svg class="ic"><use href="#i-snap"/></svg>对象捕捉</button>
                    <button class="tb"><svg class="ic"><use href="#i-dyn"/></svg>动态输入</button>
                </div>
                <div class="strip grip">
                    <button class="tb"><svg class="ic"><use href="#i-x"/></svg>交点</button>
                    <button class="tb on"><svg class="ic"><use href="#i-perp"/></svg>垂点</button>
                    <button class="tb on"><svg class="ic"><use href="#i-mid"/></svg>中点</button>
                    <button class="tb"><svg class="ic"><use href="#i-vert"/></svg>顶点</button>
                    <button class="tb"><svg class="ic"><use href="#i-coord"/></svg>坐标</button>
                </div>
                <div class="strip grip offsets">
                    <label class="combo w57"><select aria-label="偏移方式"><option>不偏移</option></select></label>
                    <i class="sep"></i>
                    <label class="num">X=<span class="spin"><input type="text" value="0"><b></b></span>mm</label>
                    <label class="num">Y=<span class="spin"><input type="text" value="0"><b></b></span>mm</label>
                    <i class="sep"></i>
                    <label class="turn"><input type="checkbox">旋转</label>
                    <label class="num"><span class="spin wide"><input type="text" value="0.000" aria-label="角度"><b></b></span>°</label>
                </div>
            </div>

            <!-- 编辑钢筋 -->
            <div class="detail">
                <div class="dock"><svg viewBox="0 0 10 10"><path d="M0 0h10v10H0z" fill="#fff" stroke="#555" stroke-width="2"/><path d="M2 2l6 6M8 2L2 8" stroke="#222" stroke-width="1.500"/></svg></div>
                <div class="detail-main">
                    <div class="strip detail-tools">
                        <button class="tb nav" aria-label="首条"><svg class="ic"><use href="#i-first"/></svg></button>
                        <button class="tb nav" aria-label="上一条"><svg class="ic"><use href="#i-prev"/></svg></button>
                        <button class="tb nav" aria-label="下一条"><svg class="ic"><use href="#i-next"/></svg></button>
                        <button class="tb nav" aria-label="末条"><svg class="ic"><use href="#i-last"/></svg></button>
                        <i class="sep"></i>
                        <button class="tb" aria-label="上移"><svg class="ic"><use href="#i-up"/></svg></button>
                        <button class="tb" aria-label="下移"><svg class="ic"><use href="#i-down"/></svg></button>
                        <i class="sep"></i>
                        <button class="tb off"><svg class="ic"><use href="#i-ins"/></svg>插入</button>
                        <button class="tb off"><svg class="ic"><use href="#i-del"/></svg>删除</button>
                        <button class="tb off"><svg class="ic"><use href="#i-scale"/></svg>缩尺配筋</button>
                        <button class="tb"><svg class="ic"><use href="#i-info"/></svg>钢筋信息</button>
                        <button class="tb"><svg class="ic"><use href="#i-lib"/></svg>钢筋图库</button>
                        <button class="tb"><svg class="ic"><use href="#i-other"/></svg>其他<i class="caret tight"></i></button>
                        <button class="tb">关闭</button>
                        <i class="sep"></i>
                        <span class="total">单构件钢筋总重(kg)：79.032</span>
                    </div>
                    <div class="grid-box">
                        <div class="grid-view">
                            <div class="grid-clip">
                                <table>
                                    <colgroup><col class="c33"><col class="c73"><col class="c56"><col class="c36"><col class="c33"><col class="c201"><col class="c166"><col class="c156"><col class="c61"><col class="c38"><col class="c39"><col class="c49"><col class="c61"><col class="c61"><col class="c71"><col class="c74"></colgroup>
                                    <thead>
                                        <tr><th></th><th>筋号</th><th class="hot">直径<i>(mm)</i></th><th>级别</th><th>图号</th><th>图形</th><th>计算公式</th><th>公式描述</th><th>长度<i>(mm)</i></th><th>根数</th><th>搭接</th><th>损耗<i>(%)</i></th><th>单重<i>(kg)</i></th><th>总重<i>(kg)</i></th><th>钢筋归类</th><th>搭接形式</th></tr>
                                    </thead>
                                    <tbody>
                                        <tr class="first"><th class="hot"><i>1*</i></th><td class="lock">横向钢筋<i>.1</i></td><td class="cur"><i>10</i></td><td class="mid">Φ</td><td><i>0</i></td>
                                            <td class="shape"><svg viewBox="0 0 200 29"><path d="M46 20V10L155 13L158 17"/><path d="M43 18l6 0-3 8z" class="head"/><text transform="translate(34 11) rotate(90)">200</text><text transform="translate(59 18) rotate(-90)">63</text><text x="101" y="16">1405</text><text transform="translate(168 12) rotate(-90)">54</text></svg></td>
                                            <td><i>1459+200+6.25*d</i></td><td>净长+端头+弯钩</td><td><i>1722</i></td><td><i>45</i></td><td><i>0</i></td><td><i>0</i></td><td><i>1.062</i></td><td><i>47.811</i></td><td>直筋</td><td>绑扎</td></tr>
                                        <tr><th><i>2</i></th><td class="lock">横向钢筋<i>.2</i></td><td><i>8</i></td><td class="mid">Φ</td><td><i>0</i></td>
                                            <td class="shape"><svg viewBox="0 0 200 60"><path d="M118 4l1 2V47H84"/><path d="M80 47l4-3h6v5h-6z" class="head"/><text transform="translate(106 14) rotate(90)">370</text><text x="84" y="58">50</text><text x="117" y="56">300</text></svg></td>
                                            <td><i>387+300+6.25*d</i></td><td>净长+端头+弯钩</td><td><i>737</i></td><td><i>21</i></td><td><i>0</i></td><td><i>0</i></td><td><i>0.291</i></td><td><i>6.113</i></td><td>直筋</td><td>绑扎</td></tr>
                                        <tr><th><i>3</i></th><td class="lock">横向钢筋<i>.3</i></td><td><i>8</i></td><td class="mid">Φ</td><td><i>0</i></td>
                                            <td class="shape"><svg viewBox="0 0 200 60"><path d="M118 4l1 2V47H84"/><path d="M80 47l4-3h6v5h-6z" class="head"/><text transform="translate(106 14) rotate(90)">370</text></svg></td>
                                            <td><i>387+39*d+6.25*d</i></td><td>净长+端头+弯钩</td><td><i>737</i></td><td><i>2</i></td><td><i>0</i></td><td><i>0</i></td><td><i>0.291</i></td><td><i>0.582</i></td><td>直筋</td><td>绑扎</td></tr>
                                    </tbody>
                                </table>
                            </div>
                            <div class="vscroll"><b class="arr up"></b><span class="thumb"></span><b class="arr down"></b></div>
                        </div>
                        <div class="hscroll"><b class="arr left"></b><span class="thumb"></span><b class="arr right"></b></div>
                    </div>
                </div>
            </div>
        </section>
    </main>

    <!-- 状态栏 -->
    <footer class="statusbar">
        <span class="s-pos"><i>X=273032 Y=12125</i></span>
        <span class="s-floor">层高<i>:4.5m</i></span>
        <span class="s-base">底标高<i>:4.45m</i></span>
        <span class="s-sel"><i>1(1)</i></span>
        <span class="s-fill"></span>
        <span class="s-fps"><i>44.7 FPS</i></span>
    </footer>

    <!-- Windows 任务栏 -->
    <div class="taskbar">
        <button class="start" aria-label="开始"><svg><use href="#w-start"/></svg></button>
        <label class="search"><b class="ring"></b><input type="text" placeholder="在这里输入你要搜索的内容"><svg><use href="#w-mic"/></svg></label>
        <div class="apps">
            <button aria-label="任务视图"><svg class="s18"><use href="#w-task"/></svg></button>
            <button aria-label="风车"><svg class="s24"><use href="#w-fan"/></svg></button>
            <button aria-label="浏览器"><svg class="s24"><use href="#w-ie"/></svg></button>
            <button aria-label="G"><svg class="s24"><use href="#w-g"/></svg></button>
            <i class="bars"></i>
            <button class="running" aria-label="广联达"><svg class="s24"><use href="#i-logo"/></svg></button>
        </div>
        <div class="tray">
            <div class="updown"><b class="arr up"></b><b class="arr down"></b></div>
            <i class="bars"></i>
            <a href="#">链接</a>
            <svg class="s18 people"><use href="#w-people"/></svg>
            <div class="cpu">33%<br>CPU使用</div>
            <div class="icons">
                <svg class="s14"><use href="#w-up"/></svg>
                <svg class="s18"><use href="#w-bat"/></svg>
                <svg class="s16"><use href="#w-wifi"/></svg>
                <svg class="s18"><use href="#w-vol"/></svg>
                <svg class="s24"><use href="#w-kbd"/></svg>
                <span class="ime">A</span>
            </div>
            <span class="sogou">S</span>
            <div class="clock">11:34<br>2018/9/18</div>
            <button class="note" aria-label="通知中心"><svg class="s18"><use href="#w-note"/></svg><b>1</b></button>
        </div>
    </div>
    <script src="rebar.js"></script>
</body>
</html>
```
FILE: rebar.js
```js
// 画构件里的钢筋
const g = document.getElementById("rebar");

function add(d) {
    const p = document.createElementNS("http://www.w3.org/2000/svg", "path");
    p.setAttribute("d", d);
    g.appendChild(p);
}

// 纵筋：两端带弯钩
const bars = [
    [390, 301, 1047, 221], [398, 315, 1054, 236], [407, 330, 1063, 250], [414, 343, 1070, 264],
    [421, 355, 1098, 271], [428, 369, 1097, 281], [437, 381, 1095, 291], [437, 384, 1095, 301],
    [438, 391, 1095, 311]
];
bars.forEach(([x1, y1, x2, y2]) => {
    add(`M${x1 + 5} ${y1 + 2}L${x1 + 1} ${y1 + 2}L${x1} ${y1}L${x1 + 4} ${y1 - 1}L${x2} ${y2}L${x2} ${y2 + 2}L${x2 - 4} ${y2 + 2}`);
});

// 箍筋
for (let i = 0; i < 44; i++) {
    const x = 427 + i * 13.05;
    const y = 276 - i * 1.61;
    const front = 345 - (x + 37 - 462) * 0.1212;
    add(`M${x} ${y}L${x} ${y + 23}M${x - 1} ${y + 14}V${y + 24}`);
    add(`M${x} ${y}L${x + 7} ${y + 16}L${x + 37} ${front + 6}`);
    if (i % 2 === 0) {
        add(`M${x + 36} ${front + 4}L${x + 33} ${front + 38}L${x + 29} ${front + 40}`);
        add(`M${x + 12} ${front + 20}L${x + 24} ${front + 40}M${x + 20} ${front + 16}L${x + 32} ${front + 38}`);
    } else {
        add(`M${x + 37} ${front + 6}L${x + 46} ${front + 26}M${x + 15} ${front + 36}L${x + 22} ${front + 16}L${x + 33} ${front + 34}`);
    }
}
```
FILE: styles.css
```css
*,
*::before,
*::after {
    box-sizing: border-box;
}

body {
    margin: 0;
    height: 100vh;
    display: flex;
    flex-direction: column;
    overflow: hidden;
    background: #f0f0f0;
    color: #000;
    font: 12px/16px "Noto Sans", "Noto Sans CJK SC", sans-serif;
}

button, input, select {
    font: inherit;
    color: inherit;
    border: none;
    background: none;
    padding: 0;
    margin: 0;
}

h1, h2, h3, ul {
    margin: 0;
    padding: 0;
    font-size: 12px;
    font-weight: normal;
}

i {
    font-style: normal;
}

svg {
    display: block;
}

.sprite {
    position: absolute;
    width: 0;
    height: 0;
}

.ic {
    width: 16px;
    height: 16px;
    flex: none;
}

/* 标题栏 */
.titlebar {
    position: relative;
    flex: none;
    height: 23px;
    display: flex;
    align-items: center;
    gap: 5px;
    padding-left: 2px;
    background: #fff;
    color: #999;
}

.titlebar h1 {
    flex: 1;
    white-space: nowrap;
    overflow: hidden;
}

.titlebar h1 span {
    font-size: 13px;
}

.win-btns {
    display: flex;
    height: 20px;
}

.win-btns button {
    width: 46px;
    display: flex;
    align-items: center;
    justify-content: center;
}

.win-btns svg {
    width: 10px;
    height: 10px;
    fill: none;
    stroke: #888;
    overflow: visible;
}

.ball {
    position: absolute;
    z-index: 5;
    left: 462px;
    top: -27px;
    width: 46px;
    height: 46px;
    border: 3px solid #fff;
    border-radius: 50%;
    background: linear-gradient(#2fb457, #4ccf5f);
    box-shadow: 0 1px 5px rgba(0, 0, 0, 0.6);
    color: #fff;
    font-weight: bold;
    text-align: center;
    padding-top: 23px;
}

/* 菜单和工具条 */
.strip {
    display: flex;
    align-items: center;
    height: 26px;
    background: linear-gradient(#fcfcfc, #eeeeee);
    border-radius: 3px;
    white-space: nowrap;
}

.menubar {
    flex: none;
    height: 29px;
    display: flex;
    align-items: center;
    padding-left: 7px;
    white-space: nowrap;
}

.menus {
    display: flex;
    gap: 11px;
    margin-right: 9px;
}

.notice {
    flex: 1;
    justify-content: center;
    margin: 0 2px 0 3px;
    color: #2d6a00;
}

.account {
    flex: 0 0 240px;
}

.more {
    margin: 0 5px 10px auto;
    font-weight: bold;
    line-height: 14px;
}

.toolbar-top {
    flex: none;
    display: flex;
    gap: 4px;
    height: 32px;
    padding-top: 2px;
}

.files {
    flex: 0 0 149px;
    padding-left: 1px;
}

.calc {
    flex: 0 0 547px;
}

.view {
    flex: 1;
}

.toolbar-top .sep {
    height: 24px;
}

.tb {
    height: 23px;
    display: flex;
    align-items: center;
    gap: 4px;
    padding: 0 3px 0 2px;
    border: 1px solid transparent;
}

.tb.on {
    background: #dbe9f5;
    border-color: #1a7fd4;
}

.tb.off {
    color: #848484;
}

.sigma {
    width: 16px;
    text-align: center;
    font-size: 14px;
}

.caret {
    width: 9px;
    display: flex;
    justify-content: center;
}

.caret::before {
    content: "";
    border: 3px solid transparent;
    border-top-color: currentColor;
    border-bottom: none;
}

.caret.tight {
    width: 6px;
    margin-left: -2px;
}

.sep {
    flex: none;
    width: 1px;
    height: 18px;
    margin: 0 2px 0 3px;
    background: #b9b9b9;
}

.tool-rows {
    flex: none;
    display: flex;
    flex-direction: column;
    gap: 2px;
    height: 84px;
}

.row {
    display: flex;
}

.grip::before {
    content: "";
    flex: none;
    width: 2px;
    height: 16px;
    margin: 0 1px 0 4px;
    background: repeating-linear-gradient(#b4b4b4 0 2px, transparent 2px 4px);
}

.comps::before {
    margin-right: 3px;
}

.comps {
    flex: 0 0 567px;
}

.axes {
    margin-left: 75px;
}

.empty {
    width: 31px;
    margin-left: 3px;
}

.combo {
    position: relative;
    display: flex;
    height: 23px;
    margin-right: 3px;
    background: linear-gradient(90deg, #fff, #fff) no-repeat 0 0 / calc(100% - 13px) 100%, #f5f5f5;
}

.combo::after {
    content: "";
    position: absolute;
    right: 3px;
    top: 10px;
    border: 3px solid transparent;
    border-top-color: #000;
    border-bottom: none;
}

.combo select {
    width: 100%;
    appearance: none;
    padding-left: 2px;
}

.draws .combo,
.offsets .combo {
    margin-right: 0;
}

.w57 {
    width: 57px;
}

.w69 {
    width: 69px;
}

/* 主体 */
main {
    flex: 1;
    min-height: 0;
    display: flex;
    gap: 5px;
}

.sidebar {
    flex: 0 0 165px;
    display: flex;
    flex-direction: column;
    padding-bottom: 1px;
}

.side-head {
    height: 15px;
    display: flex;
    align-items: center;
    gap: 8px;
    padding-right: 4px;
    margin-bottom: 1px;
    background: #0050dc;
    color: #fff;
}

.side-head h2 {
    flex: 1;
    font-size: 13px;
    line-height: 15px;
}

.side-head svg {
    width: 10px;
    height: 10px;
    fill: #fff;
}

.side-btn {
    flex: none;
    height: 22px;
    background: #f0f0f0;
    border: 1px solid #9a9a9a;
    border-top-color: #fff;
    border-left-color: #ccc;
}

.tree-tools {
    flex: none;
    height: 28px;
    display: flex;
    align-items: center;
    gap: 6px;
    padding: 0 6px;
    border-left: 1px solid #bbb;
    border-right: 1px solid #bbb;
    background: linear-gradient(#fdfdfd, #ededed);
}

.tree-tools svg {
    width: 17px;
    height: 16px;
    fill: none;
}

.tree-box {
    flex: 1;
    min-height: 0;
    display: flex;
    flex-direction: column;
    margin: 0 1px 2px 2px;
    border: 1px solid #828790;
    background: #fff;
}

.tree-view {
    flex: 1;
    min-height: 0;
    display: flex;
}

.tree {
    flex: 1;
    min-width: 0;
    overflow: hidden;
    padding-top: 1px;
    white-space: nowrap;
}

.tree i,
table i,
.statusbar i {
    font: 10px/16px "DejaVu Sans Mono", monospace;
}

.tree ul {
    list-style: none;
    margin-left: 12px;
    padding-left: 18px;
    border-left: 1px dotted #777;
}

.tree li {
    display: flex;
    align-items: center;
    height: 16px;
}

.tree li::before {
    content: "";
    flex: none;
    width: 10px;
    height: 16px;
    border-left: 1px dotted #777;
    background: repeating-linear-gradient(90deg, #777 0 1px, transparent 1px 2px) no-repeat 0 8px / 9px 1px;
}

.tree li .ic {
    margin: 0 4px 0 1px;
}

.tree .sel {
    background: linear-gradient(#d9d9d9, #d9d9d9) no-repeat 10px 0;
}

.branch {
    display: flex;
    align-items: center;
    gap: 4px;
    height: 16px;
    padding-left: 9px;
}

.branch::before {
    content: "";
    width: 6px;
    height: 6px;
    margin-right: 4px;
    border: solid #a0a0a0;
    border-width: 2px 2px 0 0;
    transform: rotate(45deg);
}

.branch.open::before {
    border-color: #404040;
    transform: rotate(135deg);
}

.grid-mark {
    width: 13px;
    height: 13px;
    margin-left: 1px;
    border: 2px solid #1f7ad0;
    background: repeating-linear-gradient(90deg, #fff 0 3px, #1f7ad0 3px 5px);
}

.new-mark {
    width: 20px;
    height: 13px;
    border: 2px solid #e6c300;
    background: #333;
}

/* 滚动条 */
.vscroll,
.hscroll {
    flex: none;
    display: flex;
    align-items: center;
    background: #f0f0f0;
}

.vscroll {
    width: 16px;
    flex-direction: column;
}

.hscroll {
    height: 17px;
}

.thumb {
    background: #cdcdcd;
}

.arr {
    flex: none;
    width: 16px;
    height: 16px;
    display: flex;
    align-items: center;
    justify-content: center;
}

.arr::before {
    content: "";
    width: 6px;
    height: 6px;
    border: solid #505050;
    border-width: 2px 2px 0 0;
    transform: rotate(45deg);
}

.arr.up::before {
    transform: rotate(-45deg);
}

.arr.down::before {
    transform: rotate(135deg);
}

.arr.left::before {
    transform: rotate(-135deg);
}

.sidebar .vscroll .thumb {
    width: 15px;
    height: 51%;
    margin: auto 0 7px;
}

.sidebar .hscroll .thumb {
    width: 102px;
    height: 15px;
    margin-right: 5px;
}

.work {
    flex: 1;
    min-width: 0;
    display: flex;
    flex-direction: column;
}

/* 三维视图 */
.viewport {
    position: relative;
    flex: 1;
    min-height: 0;
    overflow: hidden;
    background: #000;
}

.scene {
    width: 100%;
    height: 100%;
    fill: none;
    shape-rendering: crispEdges;
}

.axis-lines {
    stroke: #f00;
}

.orbit {
    stroke: #6e6e6e;
}

.bubbles {
    stroke: #008000;
}

.bubbles text {
    fill: #e8e8e8;
    stroke: none;
    font: 15px "Liberation Sans", sans-serif;
    text-anchor: middle;
}

.rebar {
    stroke: #968a85;
}

.box {
    stroke: #fff;
    stroke-width: 2;
}

.tripod path {
    stroke-width: 4;
}

.tripod text {
    font: 13px "Liberation Sans", sans-serif;
}

.float-panel {
    position: absolute;
    left: 9px;
    top: 2px;
    width: 168px;
    height: 179px;
    display: flex;
    flex-direction: column;
    border: 2px solid #2b8af0;
    background: #fff;
    padding: 0 1px;
}

.float-panel h3 {
    padding: 6px 6px 8px;
}

.checks {
    flex: 1;
    border: 1px solid #828790;
    border-width: 1px 2px 2px 1px;
    padding: 1px 2px;
}

.checks label {
    display: flex;
    align-items: center;
    gap: 3px;
    height: 12px;
}

.checks span {
    flex: 1;
    line-height: 12px;
}

.checks .focus span {
    outline: 1px dotted #000;
}

input[type="checkbox"] {
    appearance: none;
    flex: none;
    width: 11px;
    height: 11px;
    border: 1px solid #8a8a8a;
    background: #fff;
}

input[type="checkbox"]:checked::before {
    content: "";
    display: block;
    width: 8px;
    height: 4px;
    margin: 1px;
    border: solid #333;
    border-width: 0 0 1px 1px;
    transform: rotate(-45deg);
}

/* 捕捉工具 */
.snapbar {
    flex: none;
    display: flex;
    align-items: center;
    gap: 4px;
    height: 32px;
    padding-bottom: 2px;
}

.offsets,
.num {
    color: #777;
}

.offsets .combo,
.turn {
    color: #000;
}

.num {
    display: flex;
    align-items: center;
    gap: 4px;
    margin-right: 2px;
}

.spin {
    position: relative;
    display: flex;
    width: 58px;
    height: 23px;
    border: 1px solid #7a7a7a;
}

.spin.wide {
    width: 68px;
}

.spin input {
    width: 100%;
    padding-right: 19px;
    text-align: right;
}

.spin b {
    position: absolute;
    right: 4px;
    top: 3px;
    width: 6px;
    height: 15px;
}

.spin b::before,
.spin b::after {
    content: "";
    display: block;
    border: 3px solid transparent;
}

.spin b::before {
    border-top: none;
    border-bottom-color: #555;
}

.spin b::after {
    margin-top: 9px;
    border-bottom: none;
    border-top-color: #555;
}

.turn {
    display: flex;
    align-items: center;
    gap: 8px;
    margin-right: 5px;
}

.turn input {
    background: #f5f5f5;
}

/* 钢筋表 */
.detail {
    flex: none;
    height: 201px;
    display: flex;
}

.dock {
    width: 12px;
    padding: 2px 0 0 1px;
    background: radial-gradient(circle, #aaa 1px, transparent 1px) 1px 15px / 5px 5px;
}

.dock svg {
    width: 10px;
    height: 10px;
    background: #f0f0f0;
}

.detail-main {
    flex: 1;
    min-width: 0;
    display: flex;
    flex-direction: column;
}

.detail-tools {
    height: 28px;
    padding-left: 1px;
}

.detail-tools .nav {
    width: 24px;
}

.detail-tools .sep {
    margin: 0 1px;
}

.total {
    margin-left: 5px;
}

.grid-box {
    flex: 1;
    min-height: 0;
    display: flex;
    flex-direction: column;
    margin: 0 1px 1px 0;
    border: 1px solid #a0a0a0;
    border-right-width: 2px;
}

.grid-view {
    flex: 1;
    min-height: 0;
    display: flex;
    overflow: hidden;
}

.grid-clip {
    flex: 1;
    min-width: 0;
    overflow: hidden;
}

table {
    width: max(100%, 1208px);
    table-layout: fixed;
    border-collapse: separate;
    border-spacing: 0;
}

.c33 { width: 33px; }
.c36 { width: 36px; }
.c38 { width: 38px; }
.c39 { width: 39px; }
.c49 { width: 49px; }
.c56 { width: 56px; }
.c61 { width: 61px; }
.c71 { width: 71px; }
.c73 { width: 73px; }
.c74 { width: 74px; }
.c156 { width: 156px; }
.c166 { width: 166px; }
.c201 { width: 201px; }

th, td {
    height: 61px;
    padding: 0 2px;
    border: solid #b8b8b8;
    border-width: 0 1px 1px 0;
    font-weight: normal;
    text-align: left;
    white-space: nowrap;
}

th {
    text-align: center;
    background: linear-gradient(#fff, #eee);
}

thead th {
    height: 20px;
    padding: 0;
}

th.hot {
    background: linear-gradient(#ffd796, #f5bb60);
    color: #5b003c;
}

tbody th.hot {
    background: #ffd08a;
}

td {
    background: #ccffd9;
}

td.cur {
    background: #abe9d8;
}

td.lock {
    border-right: 1px solid #000;
}

td.mid {
    text-align: center;
}

.first > * {
    height: 30px;
}

.shape {
    padding: 0;
}

.shape svg {
    width: 200px;
    fill: none;
    stroke: #000;
    stroke-width: 2;
}

.shape text {
    fill: #000;
    stroke: none;
    font: 11px "Liberation Sans", sans-serif;
    text-anchor: middle;
}

.shape .head {
    fill: #000;
    stroke: none;
}

.detail .vscroll .thumb {
    width: 15px;
    height: 19px;
    margin: 1px 0 auto;
}

.detail .hscroll .thumb {
    width: 69%;
    height: 15px;
    margin: 0 auto 0 2px;
}

/* 状态栏 */
.statusbar {
    flex: none;
    display: flex;
    gap: 2px;
    height: 22px;
    padding: 2px 0 1px;
}

.statusbar span {
    padding: 0 1px;
    border: 1px solid #d0d0d0;
    background: linear-gradient(#fff, #f1f1f1);
    line-height: 17px;
    white-space: nowrap;
}

.s-pos {
    width: 148px;
}

.s-floor {
    width: 78px;
}

.s-base {
    width: 98px;
}

.s-sel {
    width: 48px;
}

.s-fill {
    flex: 1;
}

.s-fps {
    width: 70px;
}

/* 任务栏 */
.taskbar {
    flex: none;
    display: flex;
    height: 40px;
    background: #061317;
    color: #fff;
}

.taskbar button {
    display: flex;
    align-items: center;
    justify-content: center;
}

.start {
    width: 48px;
}

.start svg,
.search svg,
.s16 {
    width: 16px;
    height: 16px;
}

.s14 {
    width: 14px;
    height: 14px;
}

.s18 {
    width: 18px;
    height: 18px;
}

.s24 {
    width: 24px;
    height: 24px;
}

.search {
    width: 344px;
    display: flex;
    align-items: center;
    padding: 0 13px 0 9px;
    background: #f2f2f2;
}

.ring {
    width: 21px;
    height: 21px;
    border: 3px solid #111;
    border-radius: 50%;
}

.search input {
    flex: 1;
    padding-left: 10px;
    font-size: 14px;
}

.search input::placeholder {
    color: #555;
}

.apps {
    display: flex;
    align-items: center;
}

.apps button {
    width: 50px;
    height: 40px;
}

.apps .running {
    width: 40px;
    margin-left: 17px;
    border-bottom: 3px solid #76b9ed;
    padding-top: 3px;
}

.bars {
    width: 4px;
    height: 16px;
    margin-left: 8px;
    border: solid #4a5457;
    border-width: 0 1px;
}

.tray {
    display: flex;
    align-items: center;
    margin-left: auto;
    white-space: nowrap;
}

.tray a {
    margin-left: 10px;
    color: #fff;
    text-decoration: none;
}

.people {
    margin: 0 31px 0 23px;
}

.updown {
    width: 17px;
    height: 40px;
    display: flex;
    flex-direction: column;
    justify-content: space-between;
    padding: 1px 0;
    margin-right: 4px;
    background: #f0f0f0;
}

.cpu,
.clock {
    text-align: center;
    line-height: 17px;
}

.icons {
    display: flex;
    align-items: center;
    gap: 8px;
    margin: 0 13px 0 17px;
}

.ime {
    font-size: 20px;
    line-height: 24px;
}

.sogou {
    width: 16px;
    height: 15px;
    border-radius: 3px;
    background: #f4511e;
    font: bold 14px/15px "Liberation Sans", sans-serif;
    text-align: center;
}

.clock {
    margin-left: 17px;
}

.note {
    position: relative;
    width: 59px;
    border-right: 1px solid #4a5457;
    margin-right: 4px;
    height: 40px;
}

.note b {
    position: absolute;
    right: 10px;
    bottom: 5px;
    width: 16px;
    height: 16px;
    border: 1px solid #aaa;
    border-radius: 50%;
    background: #333;
    font: 11px/14px "Liberation Sans", sans-serif;
}
```
